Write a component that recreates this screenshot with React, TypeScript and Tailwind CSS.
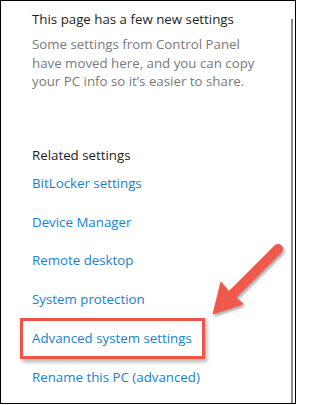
const links = [
  "BitLocker settings",
  "Device Manager",
  "Remote desktop",
  "System protection",
  "Advanced system settings",
  "Rename this PC (advanced)",
];

function Arrow() {
  return (
    <svg
      className="absolute inset-0 pointer-events-none"
      width="296"
      height="404"
      viewBox="0 0 296 404"
    >
      <defs>
        <filter id="arrowShadow" x="-20%" y="-20%" width="140%" height="140%">
          <feDropShadow dx="1.5" dy="2" stdDeviation="1.5" floodColor="#000" floodOpacity="0.35" />
        </filter>
      </defs>
      <g filter="url(#arrowShadow)" fill="#f0584b" stroke="#f0584b">
        <line x1="277" y1="248" x2="232" y2="293" strokeWidth="10" strokeLinecap="round" />
        <polygon
          points="212,313 220,281 228,291 232,294 242,303"
          strokeWidth="1"
          strokeLinejoin="round"
        />
      </g>
    </svg>
  );
}

export default function App() {
  return (
    <div
      className="relative w-[296px] h-[404px] border-[1.5px] border-black bg-white overflow-hidden"
      style={{ fontFamily: '"Open Sans", "Noto Sans", sans-serif' }}
    >
      {/* scrollbar */}
      <div className="absolute right-[2px] top-[18px] bottom-0 w-[2px] bg-[#8a8a8a]" />

      <div className="pl-[31px] pt-[8px] text-[13.3px]">
        <div className="text-[#1e1e1e] leading-[20px]">This page has a few new settings</div>
        <div className="mt-[6px] text-[#7a7a7a] leading-[18.5px]">
          <div>Some settings from Control Panel</div>
          <div>have moved here, and you can copy</div>
          <div>your PC info so it’s easier to share.</div>
        </div>

        <div className="mt-[54px] text-[#1e1e1e] leading-[20px]">Related settings</div>

        <div className="mt-[-1px]">
          {links.map((label) =>
            label === "Advanced system settings" ? (
              <div key={label} className="h-[38.8px] flex items-center">
                <div className="-ml-[12px] h-[41px] w-[185px] shrink-0 border-[3px] border-[#ee5548] pl-[9px] flex items-center shadow-[2px_3px_4px_rgba(0,0,0,0.3)]">
                  <span className="text-[#1a7fd1] leading-[20px]">{label}</span>
                </div>
              </div>
            ) : (
              <div key={label} className="h-[38.8px] flex items-center">
                <span className="text-[#1a7fd1] leading-[20px]">{label}</span>
              </div>
            )
          )}
        </div>
      </div>

      <Arrow />
    </div>
  );
}
